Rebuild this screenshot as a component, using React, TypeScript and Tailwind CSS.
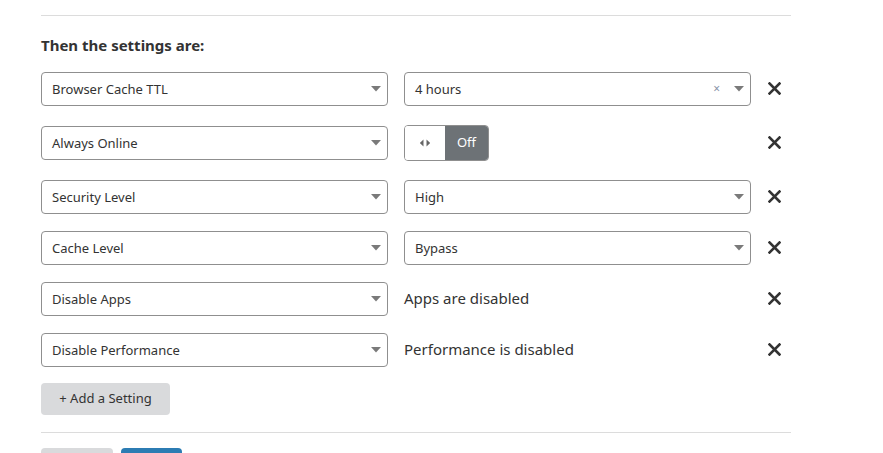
import React from "react";

const font = { fontFamily: '"Noto Sans", "Open Sans", sans-serif' };

function Arrow() {
  return (
    <svg width="10" height="6" viewBox="0 0 10 6" className="shrink-0">
      <path d="M0 0 L10 0 L5 5.5 Z" fill="#7a7a7a" />
    </svg>
  );
}

function Select({ label, clear }: { label: string; clear?: boolean }) {
  return (
    <div className="flex h-[34px] w-[347px] shrink-0 items-center rounded-[4px] border border-[#8f8f8f] bg-white pl-[10px] pr-[6px]">
      <span className="flex-1 pt-[2px] text-[13px] text-[#333]">{label}</span>
      {clear && <span className="mr-[14px] text-[12px] leading-none text-[#8a93a8]">×</span>}
      <Arrow />
    </div>
  );
}

function Remove() {
  return (
    <div className="flex w-[46px] shrink-0 justify-center">
      <svg width="13" height="13" viewBox="0 0 13 13">
        <path d="M1.5 1.5 L11.5 11.5 M11.5 1.5 L1.5 11.5" stroke="#333" strokeWidth="2.6" strokeLinecap="square" />
      </svg>
    </div>
  );
}

function Row({ left, right, mt }: { left: string; right: React.ReactNode; mt: string }) {
  return (
    <div className={`flex items-center ${mt}`}>
      <Select label={left} />
      <div className="ml-[16px] flex w-[347px] shrink-0 items-center">{right}</div>
      <Remove />
    </div>
  );
}

export default function App() {
  return (
    <div className="h-[453px] w-[883px] overflow-hidden bg-white" style={font}>
      <div className="ml-[41px] w-[750px] pt-[15px]">
        <div className="h-px bg-[#dcdcdc]" />
        <div className="mt-[18px] text-[15px] font-bold text-[#333]">Then the settings are:</div>
        <Row mt="mt-[15px]" left="Browser Cache TTL" right={<Select label="4 hours" clear />} />
        <Row
          mt="mt-[19px]"
          left="Always Online"
          right={
            <div className="flex h-[36px] w-[85px] overflow-hidden rounded-[4px] border border-[#8f8f8f]">
              <div className="flex w-[40px] items-center justify-center gap-[2px] bg-white">
                <svg width="12" height="8" viewBox="0 0 12 8">
                  <path d="M4.5 0.5 L0.8 4 L4.5 7.5 Z M7.5 0.5 L11.2 4 L7.5 7.5 Z" fill="#666" />
                </svg>
              </div>
              <div className="flex flex-1 items-center justify-center bg-[#6d7276] text-[13px] text-white">Off</div>
            </div>
          }
        />
        <Row mt="mt-[19px]" left="Security Level" right={<Select label="High" />} />
        <Row mt="mt-[17px]" left="Cache Level" right={<Select label="Bypass" />} />
        <Row mt="mt-[17px]" left="Disable Apps" right={<span className="text-[15px] text-[#333]">Apps are disabled</span>} />
        <Row mt="mt-[17px]" left="Disable Performance" right={<span className="text-[15px] text-[#333]">Performance is disabled</span>} />
        <button className="mt-[16px] flex h-[32px] w-[129px] items-center justify-center rounded-[4px] bg-[#d9dadc] text-[13px] text-[#333]">
          + Add a Setting
        </button>
        <div className="mt-[17px] h-px bg-[#dcdcdc]" />
        <div className="mt-[15px] flex gap-[8px]">
          <div className="h-[32px] w-[72px] rounded-[4px] bg-[#d9dadc]" />
          <div className="h-[32px] w-[61px] rounded-[4px] bg-[#2c7cb3]" />
        </div>
      </div>
    </div>
  );
}
